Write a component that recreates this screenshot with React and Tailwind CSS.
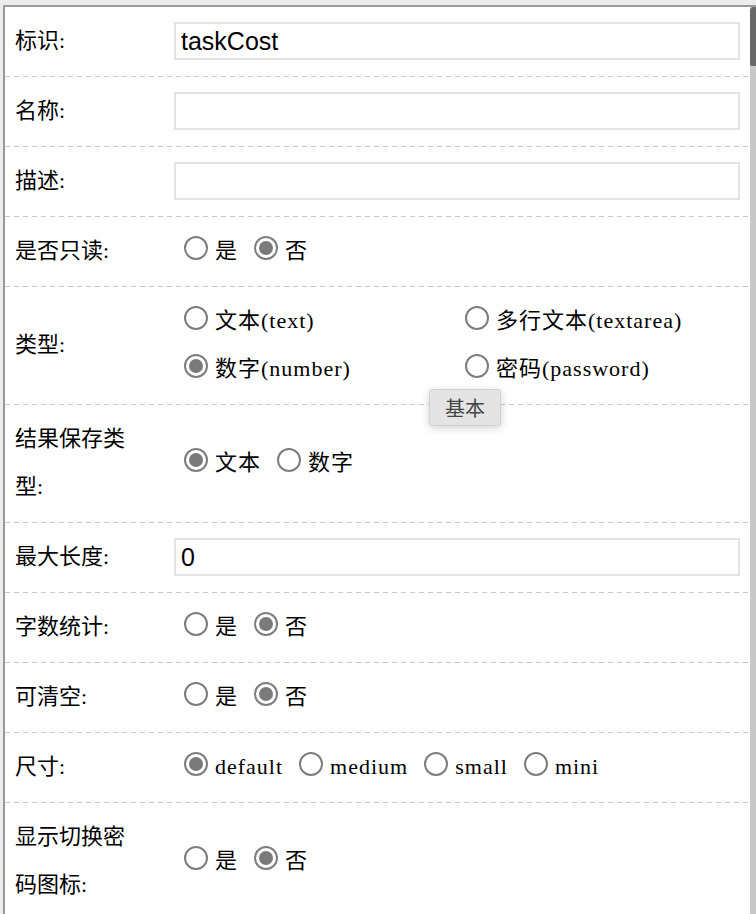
import React from "react";

const FONT = { fontFamily: '"Liberation Serif", "Noto Sans CJK SC", serif' };

function Radio({ checked, label }) {
  return (
    <span className="inline-flex items-center mr-[16px] whitespace-nowrap">
      <span className="mb-[6px] w-[24px] h-[24px] rounded-full border-2 border-[#7d7d7d] bg-white flex items-center justify-center shrink-0">
        {checked && <span className="w-[14px] h-[14px] rounded-full bg-[#7a7a7a]" />}
      </span>
      <span className="ml-[7px] tracking-[1px]">{label}</span>
    </span>
  );
}

function Sep() {
  return (
    <div className="h-px w-full bg-[repeating-linear-gradient(90deg,#c8c8c8_0px,#c8c8c8_5px,transparent_5px,transparent_9px)]" />
  );
}

function Row({ label, children }) {
  return (
    <>
      <div className="flex items-center pt-[10px] pb-[11px] leading-[48px]">
        <div className="w-[169px] pl-[10px] shrink-0">
          <div className="w-[122px]">{label}</div>
        </div>
        <div className="flex-1 pr-[10px] min-w-0">{children}</div>
      </div>
      <Sep />
    </>
  );
}

function Input({ value }) {
  return (
    <div
      className="h-[38px] w-full border-2 border-[#e3e3e3] bg-white flex items-center px-[5px] text-[25px] text-black leading-none"
      style={{ fontFamily: '"Liberation Sans", Arial, sans-serif' }}
    >
      {value}
    </div>
  );
}

function Radios({ items }) {
  return (
    <div className="pl-[10px] flex items-center h-[48px]">
      {items.map(([l, c]) => (
        <Radio key={l} label={l} checked={c} />
      ))}
    </div>
  );
}

function Cell({ pl, children }) {
  return <div className={`flex items-center h-[48px] ${pl}`}>{children}</div>;
}

export default function App() {
  const yesNo = [
    ["是", false],
    ["否", true],
  ];
  return (
    <div className="relative w-[756px] h-[914px] overflow-hidden bg-[#ececec] pl-[3px] pt-[5px]" style={FONT}>
      <div className="flex h-full border-l-2 border-t-2 border-[#999999] bg-white">
        <div className="flex-1 min-w-0 text-[22px] text-black">
          <Row label="标识:">
            <Input value="taskCost" />
          </Row>
          <Row label="名称:">
            <Input value="" />
          </Row>
          <Row label="描述:">
            <Input value="" />
          </Row>
          <Row label="是否只读:">
            <Radios items={yesNo} />
          </Row>
          <Row label="类型:">
            <div className="grid grid-cols-2">
              <Cell pl="pl-[10px]"><Radio label="文本(text)" checked={false} /></Cell>
              <Cell pl="pl-[8px]"><Radio label="多行文本(textarea)" checked={false} /></Cell>
              <Cell pl="pl-[10px]"><Radio label="数字(number)" checked={true} /></Cell>
              <Cell pl="pl-[8px]"><Radio label="密码(password)" checked={false} /></Cell>
            </div>
          </Row>
          <Row label="结果保存类型:">
            <Radios items={[["文本", true], ["数字", false]]} />
          </Row>
          <Row label="最大长度:">
            <Input value="0" />
          </Row>
          <Row label="字数统计:">
            <Radios items={yesNo} />
          </Row>
          <Row label="可清空:">
            <Radios items={yesNo} />
          </Row>
          <Row label="尺寸:">
            <Radios items={[["default", true], ["medium", false], ["small", false], ["mini", false]]} />
          </Row>
          <Row label="显示切换密码图标:">
            <Radios items={yesNo} />
          </Row>
        </div>
        <div className="w-[6px] shrink-0 bg-[#c8c8c8] flex flex-col">
          <div className="h-[59px] w-full bg-[#686868] rounded-tl-[4px] rounded-bl-[2px]" />
        </div>
      </div>
      <div
        className="absolute left-[429px] top-[389px] w-[72px] h-[37px] bg-[#e4e4e4] border border-[#d2d2d2] rounded-[3px] shadow-[0_2px_8px_rgba(0,0,0,0.18)] flex items-center justify-center text-[20px] text-[#444]"
        style={{ fontFamily: '"Noto Sans CJK SC", sans-serif' }}
      >
        基本
      </div>
    </div>
  );
}
